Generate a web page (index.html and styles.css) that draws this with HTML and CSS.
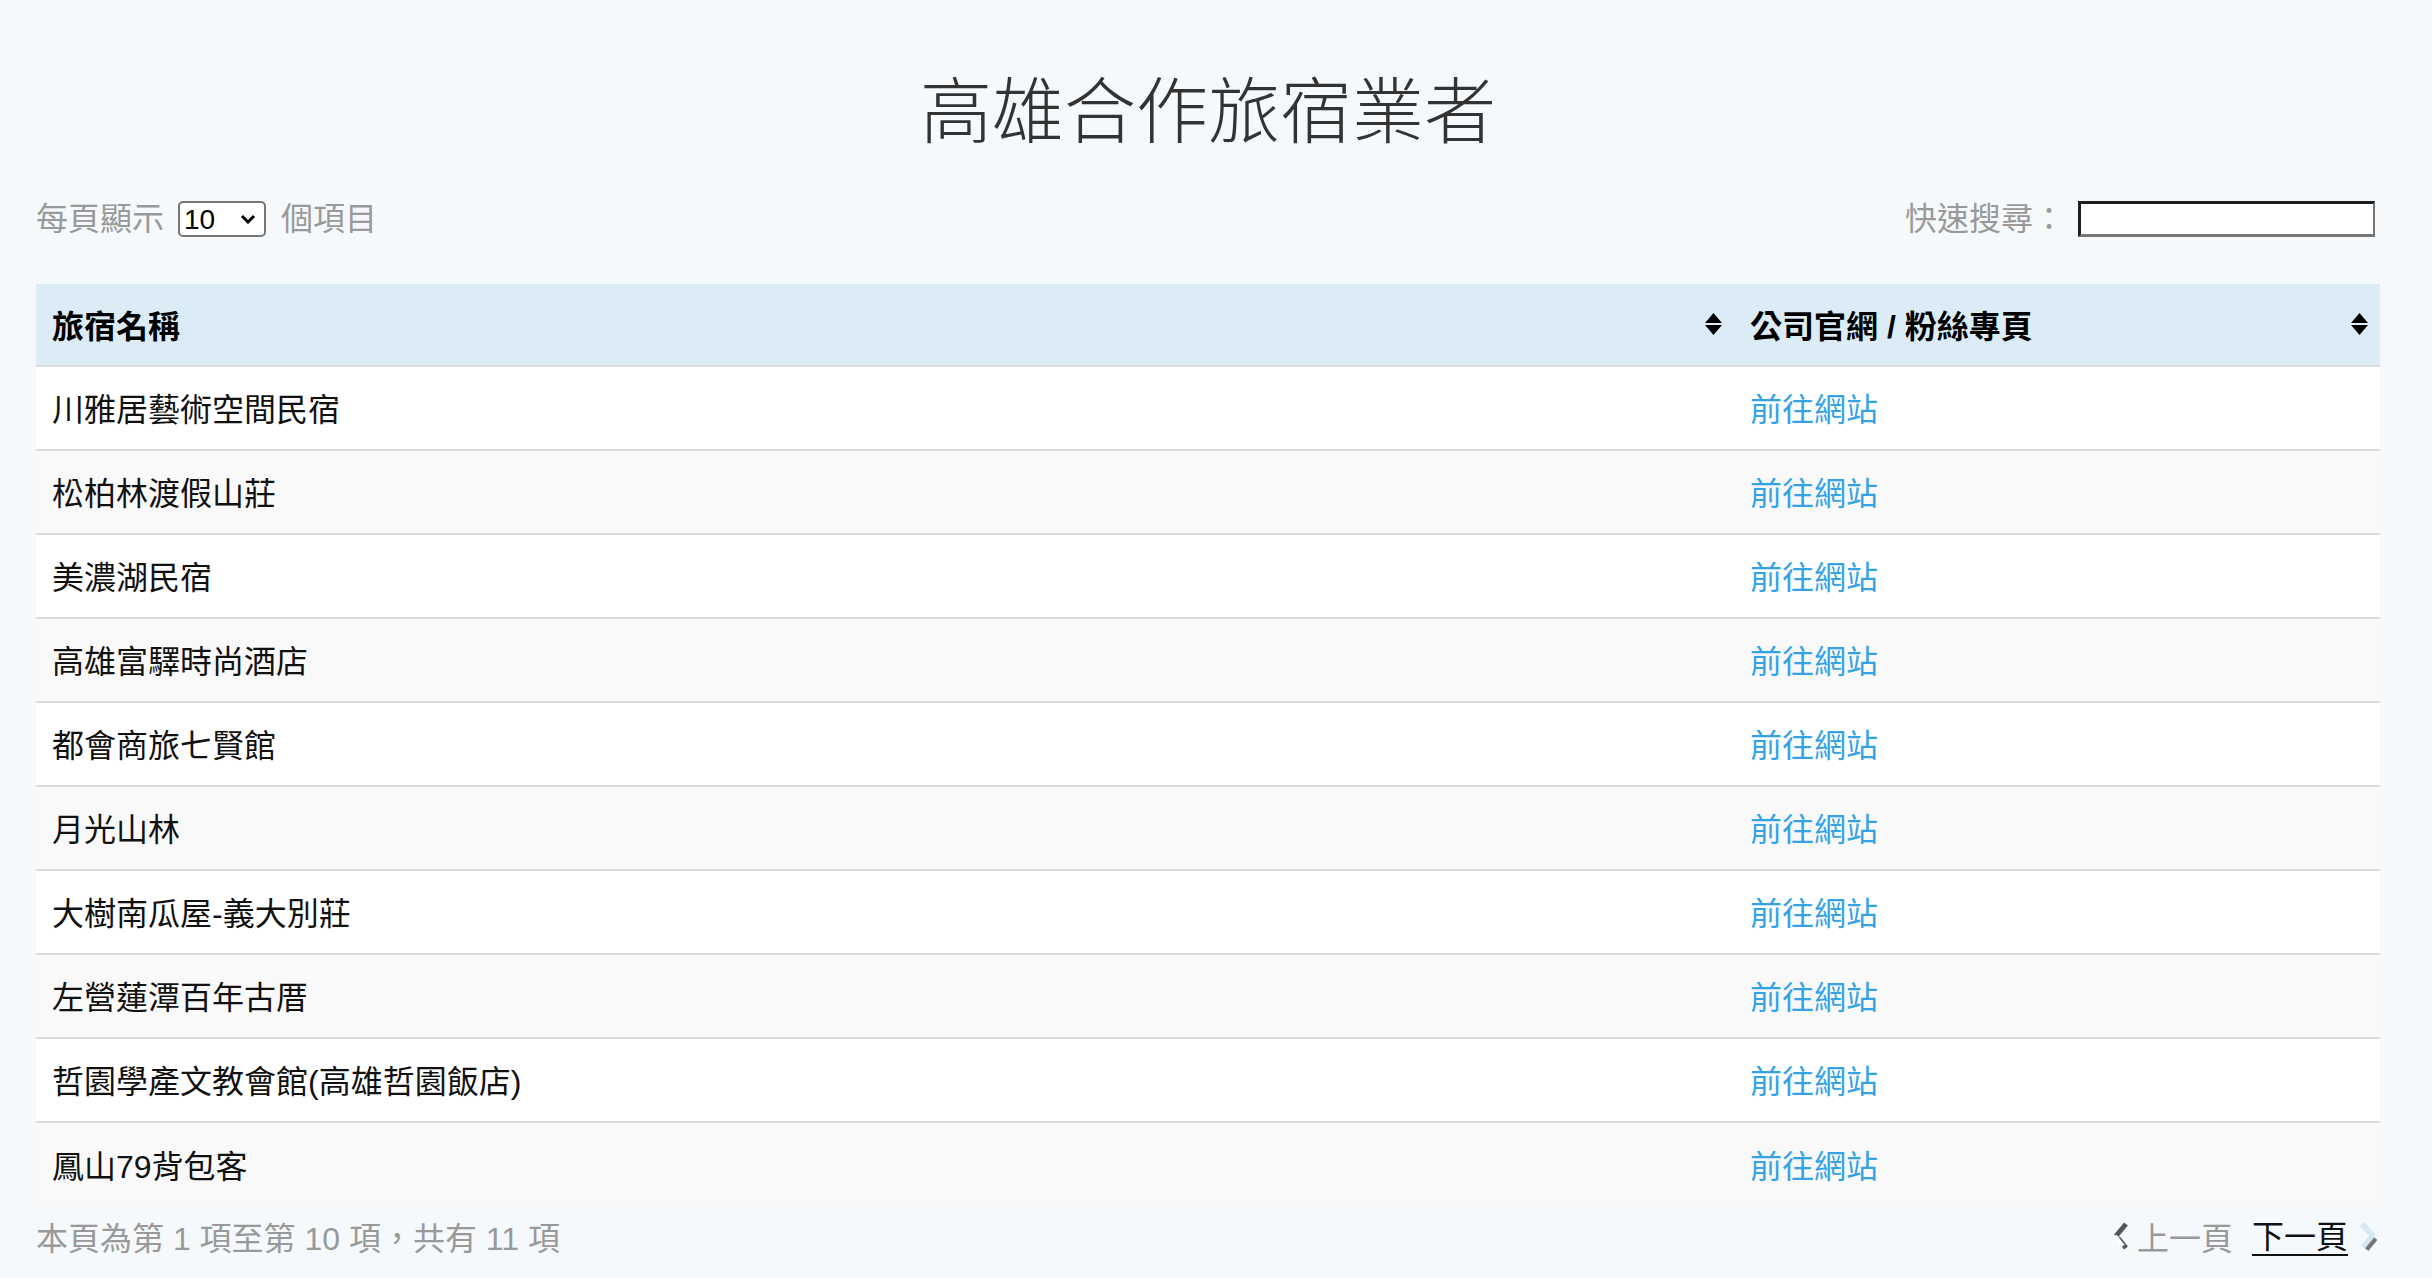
FILE: index.html
```html
<!DOCTYPE html>
<html lang="zh-Hant">
<head>
<meta charset="utf-8">
<title>高雄合作旅宿業者</title>
<link rel="stylesheet" href="styles.css">
</head>
<body>
<div class="page">
  <h1 class="title">高雄合作旅宿業者</h1>
  <div class="controls">
    <div class="length">
      <span class="muted">每頁顯示</span>
      <span class="select-wrap">
        <select class="select"><option>10</option><option>25</option><option>50</option></select>
        <svg class="select-arrow" viewBox="0 0 16 10" width="16" height="10"><path d="M2 2 L8 8 L14 2" fill="none" stroke="#000" stroke-width="3"/></svg>
      </span>
      <span class="muted">個項目</span>
    </div>
    <div class="search">
      <span class="muted">快速搜尋：</span>
      <input class="search-input" type="text">
    </div>
  </div>
  <table class="table">
    <colgroup><col class="col-name"><col class="col-link"></colgroup>
    <thead>
      <tr>
        <th><div class="th-inner"><span>旅宿名稱</span><svg class="sort" viewBox="0 0 17 22" width="17" height="22"><path d="M8.5 0 L17 10 L0 10 Z"/><path d="M0 12 L17 12 L8.5 22 Z"/></svg></div></th>
        <th><div class="th-inner"><span>公司官網 / 粉絲專頁</span><svg class="sort" viewBox="0 0 17 22" width="17" height="22"><path d="M8.5 0 L17 10 L0 10 Z"/><path d="M0 12 L17 12 L8.5 22 Z"/></svg></div></th>
      </tr>
    </thead>
    <tbody>
      <tr><td>川雅居藝術空間民宿</td><td><a href="#">前往網站</a></td></tr>
      <tr><td>松柏林渡假山莊</td><td><a href="#">前往網站</a></td></tr>
      <tr><td>美濃湖民宿</td><td><a href="#">前往網站</a></td></tr>
      <tr><td>高雄富驛時尚酒店</td><td><a href="#">前往網站</a></td></tr>
      <tr><td>都會商旅七賢館</td><td><a href="#">前往網站</a></td></tr>
      <tr><td>月光山林</td><td><a href="#">前往網站</a></td></tr>
      <tr><td>大樹南瓜屋-義大別莊</td><td><a href="#">前往網站</a></td></tr>
      <tr><td>左營蓮潭百年古厝</td><td><a href="#">前往網站</a></td></tr>
      <tr><td>哲園學產文教會館(高雄哲園飯店)</td><td><a href="#">前往網站</a></td></tr>
      <tr><td>鳳山79背包客</td><td><a href="#">前往網站</a></td></tr>
    </tbody>
  </table>
  <div class="footer">
    <div class="info">本頁為第 1 項至第 10 項，共有 11 項</div>
    <div class="pager">
      <svg class="chev" viewBox="0 0 18 28" width="18" height="28">
        <line x1="15" y1="2" x2="5" y2="14" stroke="#555" stroke-width="5"/>
        <line x1="7" y1="16" x2="15" y2="26" stroke="#555" stroke-width="5"/>
        <line x1="4" y1="14" x2="12" y2="24" stroke="#fff" stroke-width="4"/>
      </svg>
      <span class="prev">上一頁</span>
      <a class="next" href="#">下一頁</a>
      <svg class="chev" viewBox="0 0 22 30" width="22" height="30">
        <line x1="4" y1="3" x2="15" y2="15" stroke="#d4e8f6" stroke-width="6"/>
        <line x1="17" y1="17" x2="8" y2="28" stroke="#777" stroke-width="6"/>
        <line x1="15" y1="14" x2="5" y2="26" stroke="#d4e8f6" stroke-width="5"/>
      </svg>
    </div>
  </div>
</div>
</body>
</html>
```
FILE: styles.css
```css
* { box-sizing: border-box; }
html, body { margin: 0; padding: 0; }
body {
  background: #f5f9fc;
  font-family: "Liberation Sans", "Noto Sans CJK TC", sans-serif;
  font-size: 32px;
  color: #111;
}
.page {
  width: 2344px;
  margin-left: 36px;
  padding-top: 58px;
}
.title {
  margin: 0 0 47px;
  text-align: center;
  font-family: "Noto Sans CJK TC", sans-serif;
  font-weight: 300;
  font-size: 72px;
  line-height: 96px;
  color: #333;
}
.controls {
  display: flex;
  justify-content: space-between;
  align-items: center;
  height: 36px;
  margin-bottom: 47px;
}
.length, .search {
  display: flex;
  align-items: center;
}
.muted { color: #999; line-height: 36px; }
.select-wrap {
  position: relative;
  display: block;
  margin: 0 15px 0 14px;
}
.select {
  display: block;
  width: 88px;
  height: 36px;
  border: 2px solid #767676;
  border-radius: 5px;
  background: #fff;
  font-family: "Liberation Sans", sans-serif;
  font-size: 28px;
  color: #000;
  padding: 0 4px;
  appearance: none;
  -webkit-appearance: none;
}
.select-arrow {
  position: absolute;
  right: 10px;
  top: 13px;
  pointer-events: none;
}
.search-input {
  width: 297px;
  height: 36px;
  margin: 0 5px 0 13px;
  background: #fff;
  border-style: solid;
  border-width: 3px 2px 3px 3px;
  border-color: #1e1e1e #777 #777 #1e1e1e;
}
.table {
  width: 2344px;
  border-collapse: collapse;
  table-layout: fixed;
}
.col-name { width: 1698px; }
.col-link { width: 646px; }
.table th {
  background: #dbecf7;
  height: 82px;
  padding: 0 12px 2px 16px;
  text-align: left;
  font-weight: 700;
  color: #000;
}
.th-inner {
  display: flex;
  justify-content: space-between;
  align-items: center;
}
.sort { fill: #000; display: block; }
.table td {
  height: 84px;
  padding: 0 16px 2px;
  border-top: 2px solid #dcdcdc;
  background: #fff;
  color: #111;
}
.table tbody tr:nth-child(even) td { background: #f9f9f9; }
.table a { color: #35a2e6; text-decoration: none; }
.footer {
  display: flex;
  justify-content: space-between;
  align-items: center;
  height: 40px;
  margin-top: 10px;
}
.info { color: #999; }
.pager {
  display: flex;
  align-items: center;
}
.chev { display: block; }
.prev { color: #999; margin: 0 19px 0 8px; }
.next {
  color: #111;
  text-decoration: none;
  border-bottom: 2px solid #111;
  line-height: 34px;
  margin-right: 10px;
  margin-top: 4px;
}
```
